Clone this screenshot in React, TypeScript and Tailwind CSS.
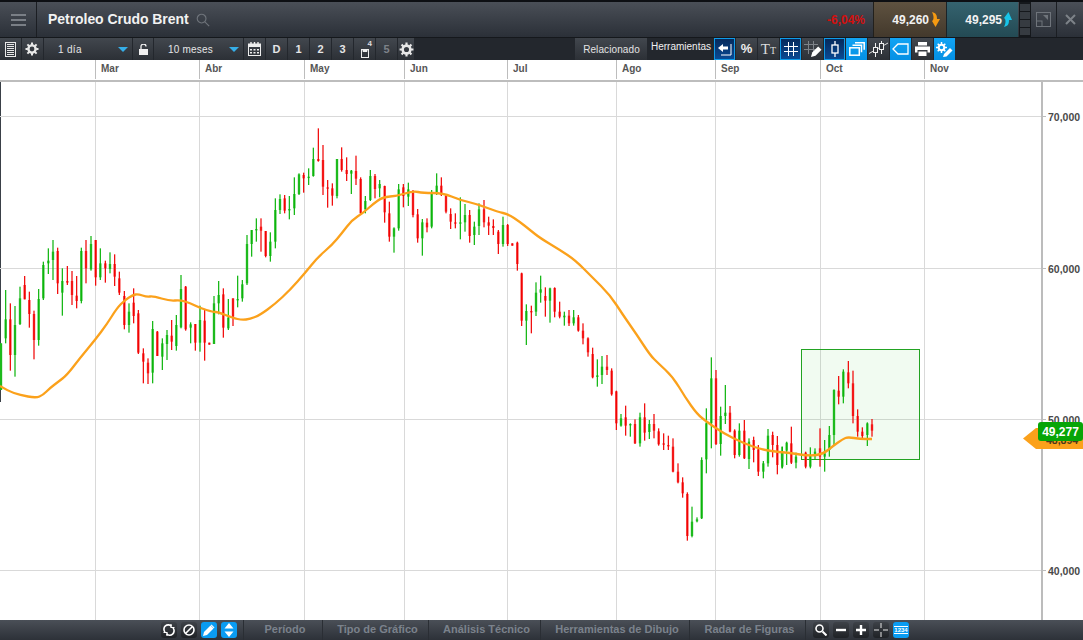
import React from "react";

type Row = [number, "g" | "r", number, number, number, number];

// candles read off the chart: x, colour, high, low, body top, body bottom (3x crop coordinates)
const groupA: Row[] = [
  [3,"g",370,510,370,510],[17,"g",210,370,298,355],[31,"r",250,452,298,405],[45,"g",258,470,315,405],[60,"g",200,315,235,312],
  [74,"r",168,238,195,238],[88,"r",215,323,240,282],[102,"r",272,418,282,360],[116,"g",207,377,237,360],[130,"g",125,240,135,235],
  [145,"g",85,162,122,130],[159,"g",60,180,95,120],[173,"r",83,222,93,190],[187,"g",145,287,183,218],[202,"r",138,195,183,188],
  [216,"r",153,255,183,225],[230,"r",168,265,227,243],[244,"g",83,250,93,243],[258,"r",60,190,93,145],[273,"g",48,152,72,148],
  [287,"r",60,197,60,172],[301,"g",85,180,130,172],[316,"r",122,188,130,145],[330,"g",97,160,132,147],[344,"r",103,198,132,170],
  [358,"r",155,225,175,218],[373,"r",213,328,228,315],[387,"g",250,338,275,315],[401,"r",205,310,248,288],[415,"r",270,402,280,398],
  [430,"r",385,490,400,425],[444,"r",415,492,428,460],[458,"g",303,490,327,458],[472,"r",333,408,335,408],[487,"g",355,450,370,410],
  [501,"g",330,420,345,372],[515,"r",300,390,347,365],[529,"g",285,392,315,378],[543,"g",165,325,207,322],[557,"r",198,332,200,328],
  [572,"g",307,370,313,323],[586,"r",312,392,312,368],[600,"g",257,395,300,368],[614,"r",270,422,302,368],[628,"r",368,374,368,374],
  [642,"g",228,372,250,372],[656,"g",183,283,225,250],[670,"r",205,353,223,323],[685,"g",237,330,293,325],[699,"r",235,318,235,290],
  [713,"g",167,262,237,240],[727,"g",180,245,193,235],[741,"g",45,195,72,190],
];
const groupB: Row[] = [
  [5,"g",330,410,330,372],[19,"g",295,365,327,331],[33,"r",295,395,320,332],[47,"r",333,412,333,408],[61,"g",337,425,365,408],
  [76,"g",235,385,270,365],[90,"g",223,282,237,270],[104,"r",225,280,235,272],[118,"g",228,298,267,271],[133,"g",172,285,222,265],
  [147,"g",160,225,163,222],[161,"r",158,218,165,175],[176,"g",145,195,170,174],[190,"g",83,170,117,168],[205,"r",25,125,117,123],
  [219,"r",75,225,120,200],[233,"r",180,263,202,206],[247,"r",190,257,205,227],[261,"g",117,235,117,228],[275,"r",82,155,117,150],
  [290,"r",112,183,150,162],[304,"g",150,222,152,161],[318,"r",107,195,153,176],[332,"r",172,283,177,280],[346,"g",228,280,243,268],
  [361,"g",150,243,168,240],[375,"r",162,235,168,207],[389,"g",180,232,192,205],[404,"r",197,308,198,277],[418,"r",245,365,280,350],
  [432,"g",322,398,325,350],[446,"g",192,332,208,325],[460,"r",192,262,202,228],[475,"g",188,258,208,230],[489,"r",210,292,215,285],
  [503,"r",267,368,283,355],[517,"g",297,407,307,355],[531,"r",295,337,308,322],[545,"g",210,325,222,320],[560,"g",160,225,197,222],
  [574,"r",172,228,197,225],[588,"r",225,280,228,275],[602,"r",265,327,282,305],[616,"r",280,325,307,311],[631,"g",232,358,307,311],
  [645,"g",252,335,285,307],[659,"r",270,368,285,348],[673,"g",305,375,320,345],[687,"g",250,345,268,318],[702,"r",240,322,268,307],
  [716,"r",290,345,307,317],[730,"r",298,345,318,324],[745,"r",330,402,335,372],[759,"g",290,380,315,372],[773,"r",312,378,315,372],
  [787,"r",370,377,370,377],[802,"r",365,452,368,432],
];
const groupC: Row[] = [
  [35,"r",38,198,40,182],[49,"g",133,255,153,182],[64,"r",137,220,153,157],[78,"g",67,168,98,155],[92,"g",47,128,88,98],
  [106,"r",82,170,108,122],[120,"g",83,188,85,122],[134,"r",82,172,84,155],[149,"r",125,175,155,170],[163,"g",155,197,167,172],
  [177,"r",150,198,167,190],[191,"g",150,197,172,190],[205,"r",165,215,172,212],[219,"r",190,253,212,235],[234,"r",232,290,235,277],
  [248,"r",263,355,282,352],[262,"g",298,380,346,351],[276,"g",288,372,320,345],[291,"r",285,345,320,330],[305,"r",325,407,332,403],
  [319,"r",392,510,394,490],[333,"g",462,500,475,497],[347,"r",437,527,472,497],[361,"g",490,530,492,496],[375,"r",478,552,492,550],
  [390,"g",458,560,472,550],[404,"r",430,542,472,518],[418,"g",480,537,492,516],[432,"r",462,535,492,512],[446,"r",505,557,514,553],
  [461,"r",520,570,550,554],[475,"r",527,570,555,558],[489,"r",535,637,560,635],[504,"r",610,670,635,667],[518,"r",652,713,667,700],
  [532,"r",697,842,702,828],[546,"g",740,832,785,828],[561,"g",772,787,778,784],[575,"g",592,777,600,775],[589,"g",445,640,490,598],
  [604,"g",292,565,355,490],[618,"r",330,555,355,552],[632,"g",440,587,468,552],[646,"g",375,492,458,468],[660,"r",438,517,458,515],
  [674,"r",508,595,512,585],[688,"g",490,590,512,585],[703,"r",480,597,512,595],[717,"g",535,627,545,597],[731,"r",530,607,540,570],
  [745,"r",555,648,568,635],[760,"g",603,655,610,635],[774,"g",507,620,527,610],[788,"r",515,592,525,555],[802,"r",528,643,555,615],
  [817,"g",560,625,575,620],
];
const groupD: Row[] = [
  [6,"g",320,385,335,360],[20,"g",305,375,308,332],[34,"r",260,372,310,368],[48,"g",338,385,350,368],[77,"r",335,385,338,380],
  [91,"g",322,385,345,380],[105,"g",325,360,335,345],[120,"r",265,380,325,350],[134,"g",300,395,340,350],[148,"g",258,350,285,330],
  [162,"g",148,315,150,285],[176,"r",108,193,152,170],[190,"g",88,190,95,170],[205,"r",63,145,97,130],[219,"r",92,250,130,228],
  [233,"r",208,290,228,275],[247,"r",262,295,275,288],[262,"g",247,318,250,285],[276,"r",237,290,253,272],
];

const groups: { ox: number; oy: number; rows: Row[] }[] = [
  { ox: 0, oy: 220, rows: groupA },
  { ox: 250, oy: 120, rows: groupB },
  { ox: 510, oy: 260, rows: groupC },
  { ox: 780, oy: 340, rows: groupD },
];

const maPoints: [number, number][] = [
  [0,386],[8,391],[20,395],[36,398],[43,395],[50,388],[58,382],[67,375],[80,358],[95,340],[107,324],[117,308],[125,300],[133,295],[138,294],
  [147,297],[153,296],[170,301],[180,300],[190,303],[200,308],[213,312],[218,312],[233,318],[242,320],[250,319],[260,315],[275,304],[290,290],
  [305,273],[318,257],[332,245],[342,233],[352,220],[363,213],[373,204],[383,197],[397,196],[413,191],[423,193],[443,193],[460,200],[477,204],
  [498,212],[508,214],[520,222],[530,230],[540,238],[560,250],[575,260],[592,277],[610,295],[623,315],[637,335],[650,355],[658,363],[673,377],
  [685,397],[697,414],[707,422],[723,433],[743,443],[763,450],[780,452],[790,453],[810,456],[823,454],[833,446],[843,439],[848,437],[860,439],[872,439],
];

// round the moving average through the midpoints of its segments
const maPath = maPoints.reduce((d, [x, y], i) => {
  if (i === 0) return `M${x} ${y}`;
  if (i === maPoints.length - 1) return `${d} L${x} ${y}`;
  const [nx, ny] = maPoints[i + 1];
  return `${d} Q${x} ${y} ${(x + nx) / 2} ${(y + ny) / 2}`;
}, "");

const gridX = [95, 199, 304, 404, 507, 616, 715, 820, 924];
const gridY = [116, 268, 419, 570];
const dates = [
  { label: "Mar", w: "w-[104px]" },
  { label: "Abr", w: "w-[105px]" },
  { label: "May", w: "w-[100px]" },
  { label: "Jun", w: "w-[103px]" },
  { label: "Jul", w: "w-[109px]" },
  { label: "Ago", w: "w-[99px]" },
  { label: "Sep", w: "w-[105px]" },
  { label: "Oct", w: "w-[104px]" },
  { label: "Nov", w: "w-[118px]" },
];

const Candles = () => (
  <>
    {groups.map((g) =>
      g.rows.map(([v, c, hi, lo, top, bot]) => {
        const x = g.ox + v / 3;
        const color = c === "g" ? "#0ab40a" : "#f00000";
        const light = c === "g" ? "#3cc43c" : "#f93a3a";
        return (
          <g key={`${g.ox}-${v}`}>
            <rect x={x - 1.2} y={g.oy + top / 3} width={2.4} height={Math.max((bot - top) / 3, 1.4)} fill={light} />
            <rect x={x - 0.6} y={g.oy + hi / 3} width={1.2} height={(lo - hi) / 3} fill={color} />
          </g>
        );
      })
    )}
  </>
);

const ToolBtn = ({ w = "w-[21px]", children, active }: { w?: string; children?: React.ReactNode; active?: "dark" | "blue" | "none" }) => {
  const cls =
    active === "dark"
      ? "bg-linear-to-b from-[#062a5c] to-[#0a4a94] border border-[#0f9be8]"
      : active === "blue"
        ? "bg-linear-to-b from-[#12a4f4] to-[#0490e4]"
        : "bg-linear-to-b from-[#42474e] to-[#2c3036]";
  return <div className={`${w} h-[22px] shrink-0 flex items-center justify-center ${cls}`}>{children}</div>;
};

const DownTri = () => (
  <svg width="10" height="5" viewBox="0 0 10 5">
    <path d="M0 0h10L5 5z" fill="#35aee8" />
  </svg>
);

const Gear = ({ size = 14, color = "#e8e8e8" }: { size?: number; color?: string }) => (
  <svg width={size} height={size} viewBox="0 0 14 14">
    <circle cx="7" cy="7" r="3.6" fill="none" stroke={color} strokeWidth="2.4" />
    <path d="M7 0.5v2.4M7 11.1v2.4M0.5 7h2.4M11.1 7h2.4M2.4 2.4l1.7 1.7M9.9 9.9l1.7 1.7M11.6 2.4L9.9 4.1M4.1 9.9l-1.7 1.7" stroke={color} strokeWidth="2" />
  </svg>
);

const NumBtn = ({ n, dim }: { n: string; dim?: boolean }) => (
  <ToolBtn>
    <span className={`text-[11px] font-bold ${dim ? "text-[#7d8289]" : "text-[#e6e6e6]"}`}>{n}</span>
  </ToolBtn>
);

const RoundBtn = ({ blue, children }: { blue?: boolean; children?: React.ReactNode }) => (
  <div
    className={`w-4 h-4 shrink-0 rounded-[3px] flex items-center justify-center ${
      blue ? "bg-[#0a9cf2]" : "bg-linear-to-b from-[#3e4248] to-[#1f2226]"
    }`}
  >
    {children}
  </div>
);

const BottomTab = ({ label, w }: { label: string; w: string }) => (
  <div className={`${w} h-full shrink-0 flex items-center justify-center pl-[4px] pb-[2px] border-r border-[#2a2e34] text-[11px] font-bold text-[#7b828c]`}>
    {label}
  </div>
);

export default function App() {
  return (
    <div className="h-screen w-full overflow-hidden flex flex-col bg-white font-['Liberation_Sans',Arial,sans-serif]">
      {/* Title bar */}
      <div className="h-[38px] shrink-0 flex border-t-2 border-[#0d0f13] border-b border-b-[#15181c] bg-linear-to-b from-[#4a4f57] to-[#2b3038]">
        <div className="w-[37px] shrink-0 flex items-center justify-center border-r border-[#1b1e23]">
          <svg width="15" height="12" viewBox="0 0 15 12">
            <path d="M0 1h15M0 6h15M0 11h15" stroke="#7a7f86" strokeWidth="2" />
          </svg>
        </div>
        <div className="pl-[11px] flex items-center gap-[7px] flex-1">
          <span className="text-[14px] font-bold tracking-[-0.05px] text-[#f2f2f2]">Petroleo Crudo Brent</span>
          <svg width="14" height="14" viewBox="0 0 15 15" fill="none" stroke="#6f747b" strokeWidth="1.2">
            <circle cx="6" cy="6" r="4.7" />
            <path d="M9.5 9.5l4.6 4.6" />
          </svg>
        </div>
        <div className="w-[46px] flex items-center text-[12px] font-bold text-[#d40f0f]">-6,04%</div>
        <div className="w-[73px] shrink-0 flex items-center justify-end gap-[2px] pr-[5px] bg-linear-to-b from-[#5f5240] to-[#43392c] border-l border-[#22201c]">
          <span className="text-[12px] font-bold text-[#f2f2f2]">49,260</span>
          <svg width="10" height="15" viewBox="0 0 10 15">
            <path d="M1 0c4 1 5 3 5 7h3l-4.500 8L1 9c2-1 2-5 0-9z" fill="#f59a12" />
          </svg>
        </div>
        <div className="w-[72px] shrink-0 flex items-center justify-end gap-[1px] pr-[5px] bg-linear-to-b from-[#35636f] to-[#234a54] border-l border-[#1a2328]">
          <span className="text-[12px] font-bold text-[#f2f2f2]">49,295</span>
          <svg width="10" height="15" viewBox="0 0 10 15">
            <path d="M1 15c4-1 5-3 5-7h3L5.500 0 1 6c2 1 2 5 0 9z" fill="#18c4e8" />
          </svg>
        </div>
        <div className="w-[12px] shrink-0 ml-px flex flex-col gap-px py-[2px] px-px bg-[#15181c]">
          <div className="flex-1 bg-[#363b41]" />
          <div className="flex-1 bg-[#363b41]" />
          <div className="flex-1 bg-[#363b41]" />
          <div className="flex-1 bg-[#363b41]" />
        </div>
        <div className="w-[26px] shrink-0 flex items-center justify-center border-r border-[#1b1e23]">
          <svg width="15" height="15" viewBox="0 0 15 15" fill="none" stroke="#6f747b" strokeWidth="1">
            <rect x="0.500" y="0.500" width="14" height="14" />
            <rect x="0.500" y="9" width="5.500" height="5.500" />
            <path d="M7 3h5v5z" fill="#6f747b" stroke="none" />
          </svg>
        </div>
        <div className="w-[26px] shrink-0 flex items-center justify-center">
          <svg width="11" height="11" viewBox="0 0 11 11">
            <path d="M1 1l9 9M10 1l-9 9" stroke="#7d8288" strokeWidth="2" />
          </svg>
        </div>
      </div>

      {/* Toolbar */}
      <div className="h-[22px] shrink-0 flex gap-px bg-[#23272d]">
        <ToolBtn>
          <svg width="11" height="15" viewBox="0 0 11 15" fill="none" stroke="#e8e8e8">
            <rect x="0.500" y="0.500" width="10" height="14" />
            <path d="M2 2.500h7M2 4.500h7M2 6.500h7M2 8.500h7M2 10.500h7M2 12.500h7" />
          </svg>
        </ToolBtn>
        <ToolBtn>
          <div className="pr-[2px] flex">
            <Gear />
          </div>
        </ToolBtn>
        <ToolBtn w="w-[88px]">
          <div className="w-full flex items-center justify-between pl-[14px] pr-[4px]">
            <span className="text-[10px] tracking-[0.3px] text-[#e6e6e6]">1 día</span>
            <DownTri />
          </div>
        </ToolBtn>
        <ToolBtn w="w-[20px]">
          <svg width="9" height="11" viewBox="0 0 9 11">
            <rect x="0" y="5" width="9" height="6" fill="#f0f0f0" />
            <path d="M2 5V2.500a2.500 2.500 0 0 1 5 0" fill="none" stroke="#f0f0f0" strokeWidth="1.300" />
          </svg>
        </ToolBtn>
        <ToolBtn w="w-[89px]">
          <div className="w-full flex items-center justify-between pl-[14px] pr-[4px]">
            <span className="text-[10px] tracking-[0.2px] text-[#e6e6e6]">10 meses</span>
            <DownTri />
          </div>
        </ToolBtn>
        <ToolBtn>
          <svg width="13" height="14" viewBox="0 0 13 14">
            <rect x="0.500" y="2" width="12" height="11.500" fill="none" stroke="#eee" />
            <path d="M3 0v3M6.500 0v3M10 0v3" stroke="#eee" strokeWidth="1.400" />
            <path d="M0 2h13v3H0z" fill="#eee" />
            <path d="M2 7h2v1.500H2zM5.500 7h2v1.500h-2zM9 7h2v1.500H9zM2 10h2v1.500H2zM5.500 10h2v1.500h-2zM9 10h2v1.500H9z" fill="#eee" />
          </svg>
        </ToolBtn>
        <NumBtn n="D" />
        <NumBtn n="1" />
        <NumBtn n="2" />
        <NumBtn n="3" />
        <ToolBtn>
          <div className="relative w-full h-full flex items-end justify-center pb-[2px]">
            <svg width="8" height="9" viewBox="0 0 8 9" fill="none" stroke="#eee" strokeWidth="1">
              <rect x="0.500" y="0.500" width="7" height="8" />
              <path d="M2 0.500h4v2H2z" fill="#eee" />
            </svg>
            <span className="absolute top-0 right-[3px] text-[8px] font-bold text-[#ddd]">4</span>
          </div>
        </ToolBtn>
        <NumBtn n="5" dim />
        <ToolBtn w="w-[16px]">
          <Gear size={15} />
        </ToolBtn>

        <div className="w-[159px] shrink-0" />
        <div className="w-[72px] h-full shrink-0 flex items-end justify-center pl-px pb-[3px] bg-linear-to-b from-[#42474e] to-[#2c3036] text-[10px] tracking-[0.1px] text-[#e4e4e4]">
          Relacionado
        </div>
        <div className="w-[65px] h-full shrink-0 pl-[3px] pt-[1px] text-[10px] text-[#f0f0f0]">Herramientas</div>

        <ToolBtn active="dark">
          <svg width="15" height="13" viewBox="0 0 15 13">
            <path d="M1 5l5-4v2.500h5v3H6V9z" fill="#fff" />
            <path d="M14 1v11H4" fill="none" stroke="#fff" strokeWidth="1" />
          </svg>
        </ToolBtn>
        <ToolBtn>
          <span className="text-[13px] font-bold text-[#eee]">%</span>
        </ToolBtn>
        <ToolBtn>
          <span className="font-['Liberation_Serif',serif] text-[#ddd] leading-none">
            <span className="text-[15px]">T</span>
            <span className="text-[10px]">T</span>
          </span>
        </ToolBtn>
        <ToolBtn active="dark">
          <svg width="14" height="14" viewBox="0 0 14 14">
            <path d="M4.500 0v14M9.500 0v14M0 4.500h14M0 9.500h14" stroke="#fff" strokeWidth="1" />
          </svg>
        </ToolBtn>
        <ToolBtn>
          <svg width="18" height="18" viewBox="0 0 18 18">
            <path d="M4.500 1v13M9.500 1v13M0 4.500h14M0 9.500h14" stroke="#7e8389" strokeWidth="1" />
            <path d="M7 17l1.200-4.500 6-6 3.300 3.300-6 6z" fill="#fff" />
          </svg>
        </ToolBtn>
        <ToolBtn active="dark">
          <svg width="8" height="16" viewBox="0 0 8 16" fill="none" stroke="#fff">
            <path d="M4 0v4M4 12v4" strokeWidth="1.300" />
            <rect x="1" y="4" width="6" height="8" strokeWidth="1.300" />
          </svg>
        </ToolBtn>
        <ToolBtn active="blue">
          <svg width="16" height="14" viewBox="0 0 16 14" fill="none" stroke="#fff" strokeWidth="1.500">
            <rect x="0.800" y="5.800" width="9.500" height="7.400" />
            <path d="M3.500 3.200h9v7M6 0.800h9.200v7" />
          </svg>
        </ToolBtn>
        <ToolBtn>
          <svg width="19" height="16" viewBox="0 0 19 16" fill="none" stroke="#f0f0f0">
            <path d="M0 12.500L19 2" strokeWidth="0.900" />
            <path d="M6.500 2v14M12.500 0v13" strokeWidth="1" />
            <rect x="4.500" y="6.500" width="4" height="5" fill="#34383e" />
            <rect x="10.500" y="2.500" width="4" height="6" fill="#34383e" />
          </svg>
        </ToolBtn>
        <ToolBtn active="blue">
          <svg width="17" height="12" viewBox="0 0 17 12" fill="none" stroke="#fff" strokeWidth="1.300">
            <path d="M1 6l5-5h10v10H6z" />
          </svg>
        </ToolBtn>
        <ToolBtn>
          <svg width="15" height="14" viewBox="0 0 15 14">
            <path d="M3 0h9v3.500H3zM0 4.500h15v6h-2.500V8h-10v2.500H0zM3.500 9.500h8V14h-8z" fill="#fff" />
          </svg>
        </ToolBtn>
        <ToolBtn active="blue">
          <svg width="17" height="15" viewBox="0 0 17 15">
            <circle cx="5.500" cy="5.500" r="2.800" fill="none" stroke="#fff" strokeWidth="2" />
            <path d="M5.500 0v2M5.500 9v2M0 5.500h2M9 5.500h2M1.700 1.700l1.400 1.400M7.900 7.900l1.400 1.400M9.300 1.700L7.900 3.100M3.100 7.900L1.700 9.300" stroke="#fff" strokeWidth="1.500" />
            <path d="M7 15l1-3 6-6 2.500 2.500-6 6z" fill="#fff" />
          </svg>
        </ToolBtn>
      </div>

      {/* Dates */}
      <div className="h-[22px] shrink-0 flex bg-white border-b-2 border-[#bdbdbd]">
        <div className="w-[95px] shrink-0" />
        {dates.map((d) => (
          <div key={d.label} className={`${d.w} shrink-0 border-l border-[#bdbdbd] mb-px pl-[5px] pt-[4px] text-[10px] font-bold leading-none text-[#555]`}>
            {d.label}
          </div>
        ))}
      </div>

      {/* Chart */}
      <div className="relative flex-1 min-h-0 bg-white">
        <svg className="block w-full h-full" viewBox="0 82 1083 538" preserveAspectRatio="none">
          <rect x="0" y="82" width="1" height="320" fill="#3a4047" />
          {gridX.map((x) => (
            <rect key={x} x={x} y={82} width={1} height={538} fill="#d9d9d9" />
          ))}
          {gridY.map((y) => (
            <rect key={y} x={0} y={y} width={1041} height={1} fill="#d9d9d9" />
          ))}
          <rect x={1041} y={82} width={2} height={538} fill="#bcbcbc" />
          {gridY.map((y) => (
            <g key={y}>
              <rect x={1043} y={y} width={3} height={1} fill="#bcbcbc" />
              <text x={1048} y={y + 5} fontSize="10.500" fontWeight="700" fill="#4a4a4a">
                {y === 116 ? "70,000" : y === 268 ? "60,000" : y === 419 ? "50,000" : "40,000"}
              </text>
            </g>
          ))}
          <rect x="801.500" y="349.500" width="118" height="110" fill="#0ab40a" fillOpacity="0.06" stroke="#22a322" strokeWidth="1" />
          <Candles />
          <path d={maPath} fill="none" stroke="#fba11b" strokeWidth="2.300" strokeLinejoin="round" />
        </svg>

        {/* price tags over the axis */}
        <div className="absolute left-[1023px] top-[346px] h-[21px] w-[60px]">
          <div className="absolute inset-0 bg-[#fba11b] [clip-path:polygon(0_50%,13px_0,100%_0,100%_100%,13px_100%)]" />
          <span className="absolute left-[23px] top-[5px] text-[10.500px] font-bold leading-[14px] text-[#4a3a1a]">48,894</span>
        </div>
        <div className="absolute left-[1038px] top-[340px] h-[19px] w-[45px] rounded-[3px] bg-[#07a507] flex items-center justify-center text-[12px] font-bold text-white">
          49,277
        </div>
      </div>

      {/* Bottom bar */}
      <div className="h-[20px] shrink-0 flex items-center pl-[161px] bg-linear-to-b from-[#4a4f57] to-[#2d3138]">
        <div className="flex gap-1 w-[83px] shrink-0 h-full items-center border-r border-[#2a2e34]">
          <RoundBtn>
            <svg width="12" height="12" viewBox="0 0 12 12" fill="none" stroke="#fff" strokeWidth="1.600">
              <path d="M2 8A4.300 4.300 0 0 1 8.500 2.300M10 4a4.300 4.300 0 0 1-6.500 5.700" />
              <path d="M8 0v3.500h3.500M4 12V8.500H.5" strokeWidth="1.200" />
            </svg>
          </RoundBtn>
          <RoundBtn>
            <svg width="12" height="12" viewBox="0 0 12 12" fill="none" stroke="#fff" strokeWidth="1.600">
              <circle cx="6" cy="6" r="5" />
              <path d="M2.500 9.500l7-7" />
            </svg>
          </RoundBtn>
          <RoundBtn blue>
            <svg width="12" height="12" viewBox="0 0 12 12">
              <path d="M0 12l1-4 6.500-6.500 3 3L4 11z" fill="#fff" />
              <path d="M8.500 0.500l3 3-.800.800-3-3z" fill="#fff" />
            </svg>
          </RoundBtn>
          <RoundBtn blue>
            <svg width="10" height="14" viewBox="0 0 10 14">
              <path d="M5 0l4.500 5.500h-9zM5 14l4.500-5.500h-9z" fill="#fff" />
            </svg>
          </RoundBtn>
        </div>
        <BottomTab label="Período" w="w-[79px]" />
        <BottomTab label="Tipo de Gráfico" w="w-[106px]" />
        <BottomTab label="Análisis Técnico" w="w-[112px]" />
        <BottomTab label="Herramientas de Dibujo" w="w-[149px]" />
        <BottomTab label="Radar de Figuras" w="w-[116px]" />
        <div className="flex gap-1 shrink-0 ml-[7px]">
          <RoundBtn>
            <svg width="12" height="12" viewBox="0 0 12 12" fill="none" stroke="#fff" strokeWidth="1.600">
              <circle cx="4.500" cy="4.500" r="3.500" />
              <path d="M7.500 7.500l4 4" strokeWidth="2" />
            </svg>
          </RoundBtn>
          <RoundBtn>
            <svg width="10" height="10" viewBox="0 0 10 10">
              <path d="M0 5h10" stroke="#fff" strokeWidth="2.400" />
            </svg>
          </RoundBtn>
          <RoundBtn>
            <svg width="10" height="10" viewBox="0 0 10 10">
              <path d="M0 5h10M5 0v10" stroke="#fff" strokeWidth="2.400" />
            </svg>
          </RoundBtn>
          <RoundBtn>
            <svg width="14" height="14" viewBox="0 0 14 14">
              <path d="M0 7h5M9 7h5M7 0v5M7 9v5" stroke="#e8e8e8" strokeWidth="1" />
            </svg>
          </RoundBtn>
          <RoundBtn blue>
            <span className="text-[6px] font-bold leading-none text-white border-y border-white">1234</span>
          </RoundBtn>
        </div>
      </div>
    </div>
  );
}
